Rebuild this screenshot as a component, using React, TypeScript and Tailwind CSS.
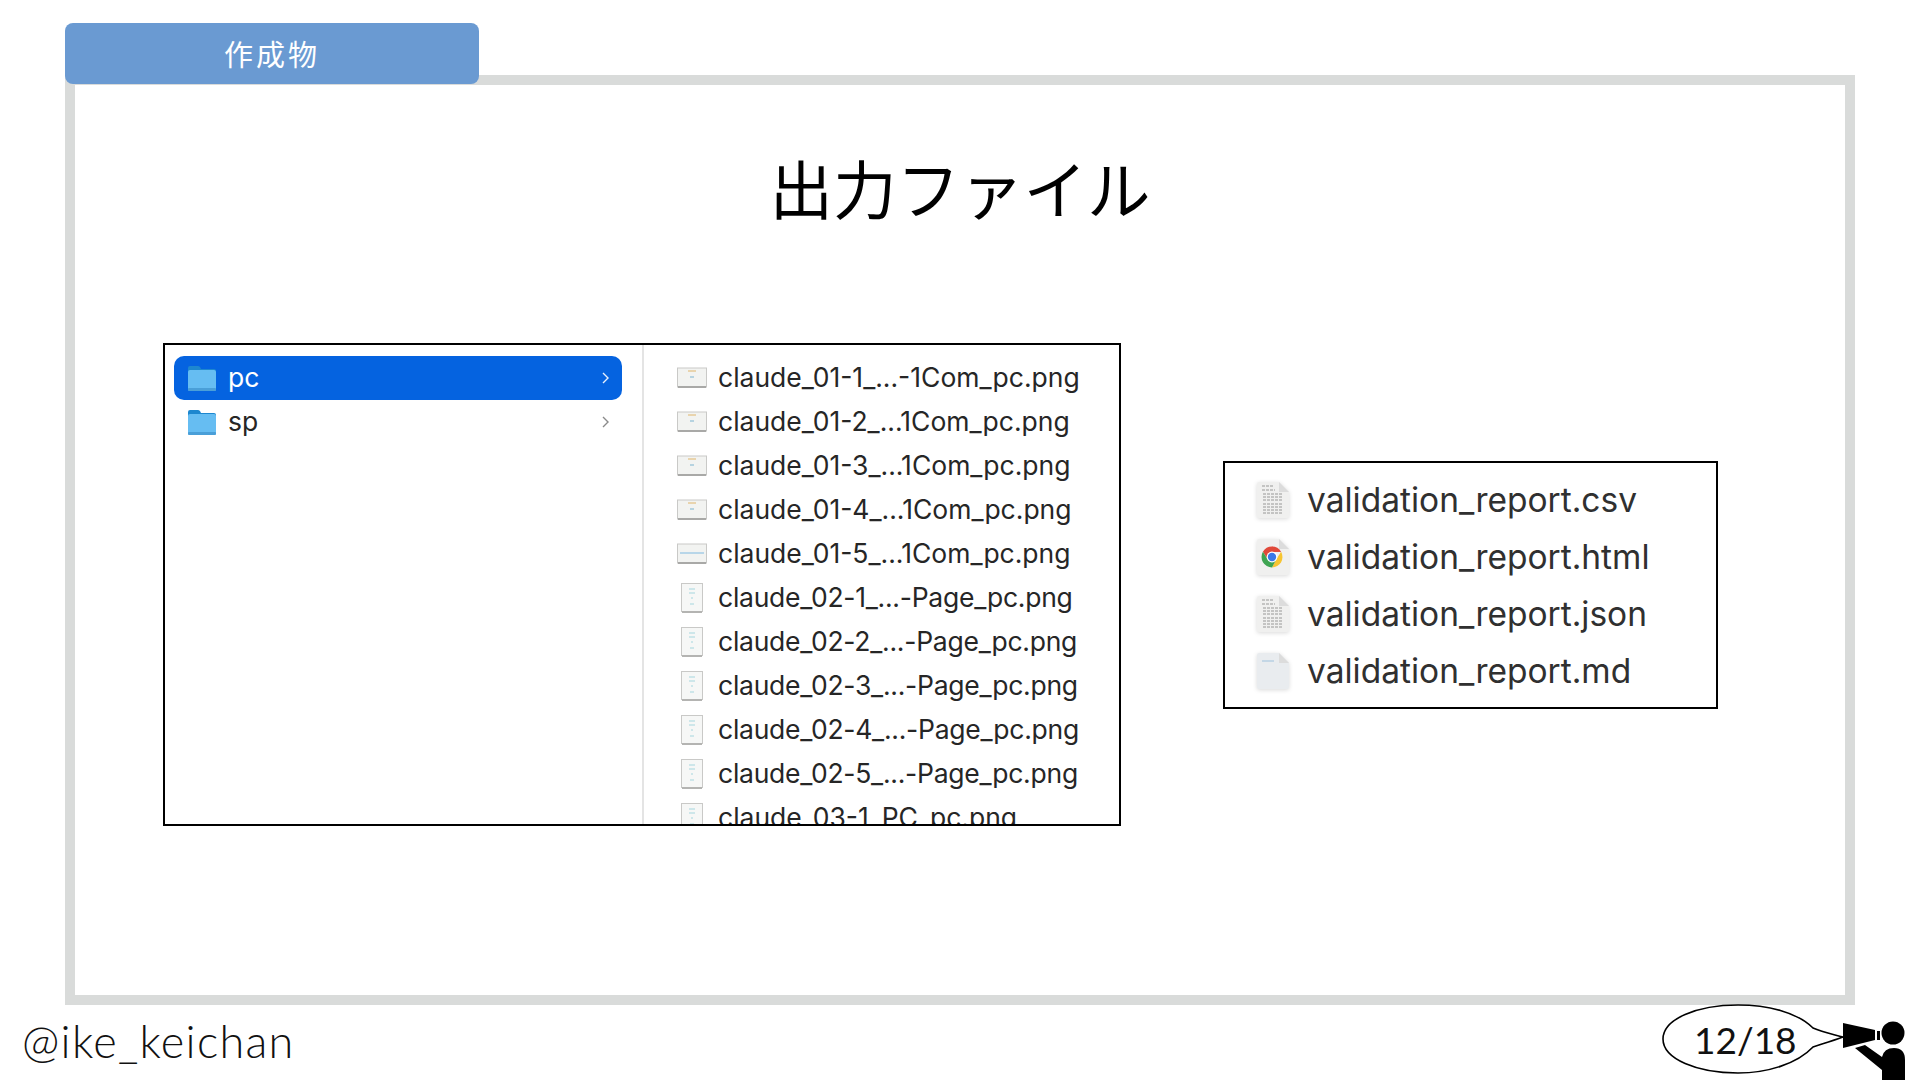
const cjk = '"Noto Sans CJK JP", sans-serif';

const columnFiles = [
  "claude_01-1_...-1Com_pc.png",
  "claude_01-2_...1Com_pc.png",
  "claude_01-3_...1Com_pc.png",
  "claude_01-4_...1Com_pc.png",
  "claude_01-5_...1Com_pc.png",
  "claude_02-1_...-Page_pc.png",
  "claude_02-2_...-Page_pc.png",
  "claude_02-3_...-Page_pc.png",
  "claude_02-4_...-Page_pc.png",
  "claude_02-5_...-Page_pc.png",
  "claude_03-1_PC_pc.png",
];

const Folder = () => (
  <svg width="30" height="28" viewBox="0 0 30 28" className="shrink-0">
    <path d="M1 4q0-2 2-2h8q1 0 2 1l1 2h13q2 0 2 2v4H1z" fill="#1d87cf" />
    <rect x="1" y="6" width="28" height="21" rx="2" fill="#66bdf2" />
    <rect x="1" y="24" width="28" height="3" rx="1" fill="#4a9fd8" />
  </svg>
);

const Chevron = ({ selected }: { selected: boolean }) => (
  <svg width="10" height="14" viewBox="0 0 10 14" className="shrink-0">
    <path d="M2 2l5 5-5 5" fill="none" stroke={selected ? "#e8f0fc" : "#8a8a8a"} strokeWidth="1.4" />
  </svg>
);

const WideThumb = ({ strong }: { strong?: boolean }) => (
  <svg width="30" height="22" viewBox="0 0 30 22">
    <rect x="0.5" y="1" width="29" height="19" fill="#f2f3f1" stroke="#c9c9c7" />
    <rect x="1" y="19" width="28" height="2" fill="#a9a9a7" />
    {strong ? (
      <path d="M3 10h24" stroke="#7fb9e0" strokeWidth="1" />
    ) : (
      <>
        <path d="M11 4h8" stroke="#e0b56a" strokeWidth="1" />
        <path d="M13 10h4" stroke="#9cc4d8" strokeWidth="1.4" />
      </>
    )}
  </svg>
);

const TallThumb = () => (
  <svg width="22" height="30" viewBox="0 0 22 30">
    <rect x="0.5" y="0.5" width="21" height="28" fill="#f6f7f6" stroke="#c9c9c7" />
    <rect x="1" y="28" width="20" height="2" fill="#b4b4b2" />
    <path d="M8 6h6M8 10h6M10 15h2M9 21h4" stroke="#a5d6de" strokeWidth="1" />
  </svg>
);

const DocIcon = ({ blank, lines = true }: { blank?: boolean; lines?: boolean }) => (
  <svg width="34" height="38" viewBox="0 0 34 38" className="shrink-0 drop-shadow-sm">
    <path d="M1 3q0-2 2-2h20l10 10v24q0 2-2 2H3q-2 0-2-2z" fill={blank ? "#e9ecef" : "#f0f0ef"} />
    <path d="M23 1v10h10z" fill="#dcdcdc" />
    {lines && (
      <path
        d="M6 5h12M6 9h13M7 13h20M7 16h20M7 19h20M7 23h20M7 26h20M7 29h20M7 32h20"
        stroke="#b5b5b5"
        strokeWidth="1.4"
        strokeDasharray="3 1"
      />
    )}
    {blank && <path d="M6 9h12" stroke="#c4d7e6" strokeWidth="2" />}
  </svg>
);

const ChromeIcon = () => (
  <svg width="34" height="38" viewBox="0 0 34 38" className="shrink-0 drop-shadow-sm">
    <path d="M1 3q0-2 2-2h20l10 10v24q0 2-2 2H3q-2 0-2-2z" fill="#f0f0ef" />
    <path d="M23 1v10h10z" fill="#dcdcdc" />
    <g transform="translate(16 19)">
      <path d="M0-10.5A10.5 10.5 0 0 1 9.1-5.2L0 -5z" fill="#e0493a" />
      <path d="M-9.1-5.2A10.5 10.5 0 0 1 0-10.5L9.1-5.2H0L-4.5 2z" fill="#e0493a" />
      <path d="M9.1-5.2A10.5 10.5 0 0 1 0 10.5L4.5 2z" fill="#f7c531" />
      <path d="M0 10.5A10.5 10.5 0 0 1-9.1-5.2L-4.5 2 4.5 2z" fill="#3fa452" />
      <circle r="5.4" fill="#fff" />
      <circle r="4.2" fill="#3b78e7" />
    </g>
  </svg>
);

// speech bubble + person with a megaphone
const Herald = () => (
  <svg width="258" height="76" viewBox="0 0 258 76" className="block">
    <path
      d="M181 33C170 30 160 28 151 24C135 8 105 1 76 1C35 1 1 15 1 35C1 55 35 69 76 69C105 69 135 60 151 43C160 40 170 37 181 33Z"
      fill="#fff"
      stroke="#000"
      strokeWidth="1.6"
    />
    <path d="M181 19V44L213 36V26Z" fill="#000" />
    <rect x="215" y="27" width="3" height="9" fill="#000" />
    <circle cx="231" cy="29" r="11.5" fill="#000" />
    <path d="M193 44L203 41L220 53Q222 44 232 44Q243 44 243 56V76H220V66Z" fill="#000" />
  </svg>
);

export default function App() {
  return (
    <div className="w-[1920px] h-[1080px] overflow-hidden bg-white pt-[23px]" style={{ fontFamily: cjk }}>
      <div className="relative z-10 ml-[65px] flex h-[61px] w-[414px] items-center justify-center rounded-[8px] bg-[#6a9ad2] text-[29px] font-normal tracking-[3px] text-white">
        作成物
      </div>

      <main className="-mt-[9px] ml-[65px] h-[930px] w-[1790px] border-[10px] border-[#d9dbda]">
        <h1 className="mt-[64px] text-center text-[63.5px] leading-[74px] font-normal text-black">出力ファイル</h1>

        <div className="mt-[120px] flex items-center">
          <section
            className="ml-[88px] flex h-[483px] w-[958px] shrink-0 overflow-hidden border-2 border-black text-[26.5px] text-[#262626]"
            style={{ fontFamily: "Inter, sans-serif" }}
          >
            <div className="w-[479px] shrink-0 border-r-2 border-[#e4e4e4] pt-[11px] pl-[9px] pr-[20px]">
              <div className="flex h-[44px] items-center rounded-[10px] bg-[#0563e0] pl-[13px] pr-[11px] text-white">
                <Folder />
                <span className="ml-[11px] flex-1">pc</span>
                <Chevron selected />
              </div>
              <div className="flex h-[44px] items-center pl-[13px] pr-[11px]">
                <Folder />
                <span className="ml-[11px] flex-1">sp</span>
                <Chevron selected={false} />
              </div>
            </div>
            <ul className="pt-[11px] pl-[32px]">
              {columnFiles.map((name, i) => (
                <li key={name} className="flex h-[44px] items-center">
                  <span className="flex w-[31px] justify-center">{i < 5 ? <WideThumb strong={i === 4} /> : <TallThumb />}</span>
                  <span className={i >= 5 && i < 10 ? "ml-[11px] whitespace-nowrap tracking-[-0.25px]" : "ml-[11px] whitespace-nowrap"}>{name}</span>
                </li>
              ))}
            </ul>
          </section>

          <section
            className="ml-[102px] h-[248px] w-[495px] shrink-0 border-2 border-black pt-[9px] pl-[31px] text-[33.5px] text-[#303030]"
            style={{ fontFamily: "Inter, sans-serif" }}
          >
            <div className="flex h-[57px] items-center gap-[17px]"><DocIcon />validation_report.csv</div>
            <div className="flex h-[57px] items-center gap-[17px]"><ChromeIcon />validation_report.html</div>
            <div className="flex h-[57px] items-center gap-[17px]"><DocIcon />validation_report.json</div>
            <div className="flex h-[57px] items-center gap-[17px]"><DocIcon blank lines={false} />validation_report.md</div>
          </section>
        </div>
      </main>

      <footer className="flex h-[75px] items-start justify-between">
        <div className="ml-[22px] mt-[8px] text-[45px] leading-[56px] font-light tracking-[1.3px] text-[#111]" style={{ fontFamily: "Lato, sans-serif" }}>
          @ike_keichan
        </div>
        <div className="relative -mt-[1px] w-[258px]">
          <Herald />
          <span className="absolute left-[32px] top-[13px] text-[37px] leading-[46px] font-normal text-[#111]" style={{ fontFamily: "Lato, sans-serif" }}>
            12/18
          </span>
        </div>
      </footer>
    </div>
  );
}
